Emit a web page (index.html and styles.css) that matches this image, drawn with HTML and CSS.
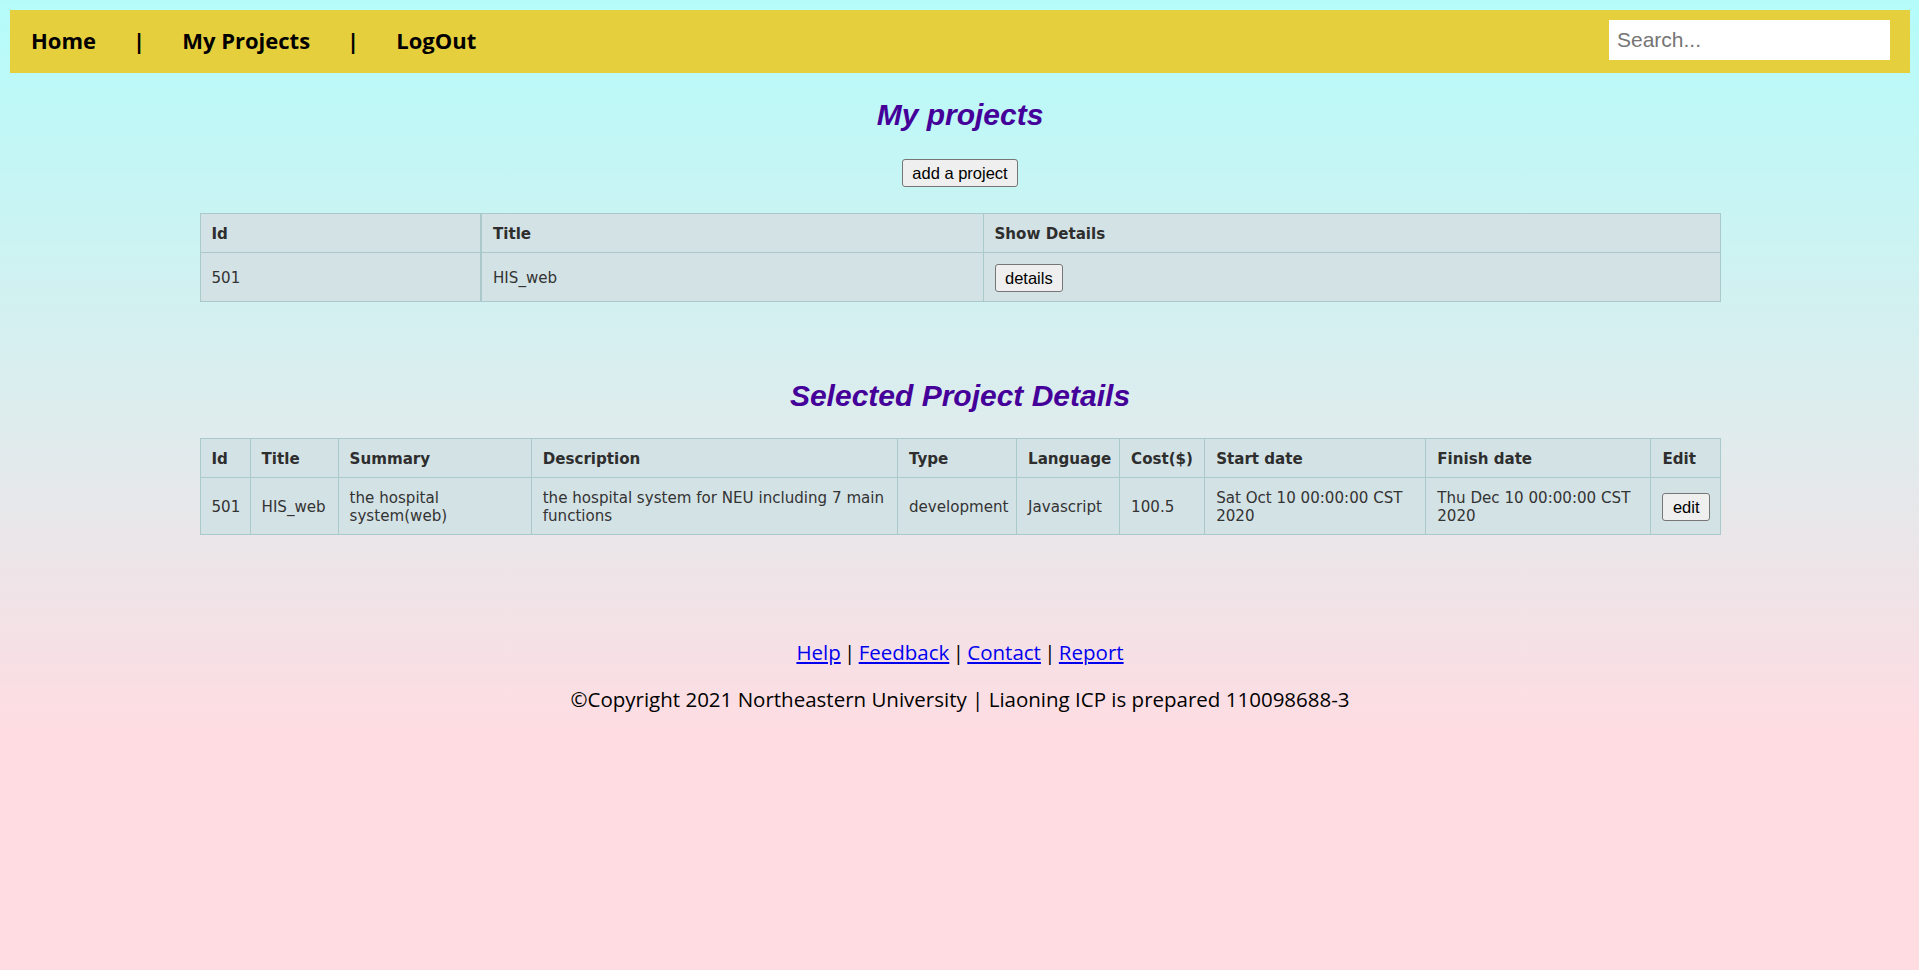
FILE: index.html
```html
<!DOCTYPE html>
<html lang="en">
<head>
<meta charset="utf-8">
<title>My projects</title>
<link rel="stylesheet" href="styles.css">
</head>
<body>
<nav class="topnav">
  <a class="nav-link" href="#">Home</a>
  <span class="nav-sep">|</span>
  <a class="nav-link" href="#">My Projects</a>
  <span class="nav-sep">|</span>
  <a class="nav-link" href="#">LogOut</a>
  <input class="search" type="text" placeholder="Search...">
</nav>

<main class="content">
  <h2 class="page-title">My projects</h2>
  <div class="actions"><button class="btn" type="button">add a project</button></div>

  <table class="grid grid-projects">
    <thead>
      <tr>
        <th class="c-pid">Id</th>
        <th class="c-ptitle">Title</th>
        <th>Show Details</th>
      </tr>
    </thead>
    <tbody>
      <tr>
        <td>501</td>
        <td>HIS_web</td>
        <td><button class="btn" type="button">details</button></td>
      </tr>
    </tbody>
  </table>

  <h2 class="page-title second">Selected Project Details</h2>

  <table class="grid grid-details">
    <thead>
      <tr>
        <th class="c-id">Id</th>
        <th class="c-title">Title</th>
        <th class="c-summary">Summary</th>
        <th class="c-desc">Description</th>
        <th class="c-type">Type</th>
        <th class="c-lang">Language</th>
        <th class="c-cost">Cost($)</th>
        <th class="c-start">Start date</th>
        <th class="c-finish">Finish date</th>
        <th class="c-edit">Edit</th>
      </tr>
    </thead>
    <tbody>
      <tr>
        <td>501</td>
        <td>HIS_web</td>
        <td>the hospital system(web)</td>
        <td>the hospital system for NEU including 7 main functions</td>
        <td>development</td>
        <td>Javascript</td>
        <td>100.5</td>
        <td>Sat Oct 10 00:00:00 CST 2020</td>
        <td>Thu Dec 10 00:00:00 CST 2020</td>
        <td><button class="btn" type="button">edit</button></td>
      </tr>
    </tbody>
  </table>
</main>

<footer class="footer">
  <p class="footer-links"><a href="#">Help</a> | <a href="#">Feedback</a> | <a href="#">Contact</a> | <a href="#">Report</a></p>
  <p class="footer-copy">©Copyright 2021 Northeastern University | Liaoning ICP is prepared 110098688-3</p>
</footer>
</body>
</html>
```

FILE: styles.css
```css
html {
  min-height: 100%;
  background: linear-gradient(180deg, #b4fcfa 0px, #dcedee 400px, #ffdce2 740px, #ffdce2 100%);
}

body {
  margin: 10px 9px 0 10px;
  font-family: "Liberation Sans", Arial, sans-serif;
}

.topnav {
  display: flex;
  align-items: center;
  gap: 37px;
  height: 63px;
  padding: 0 20px 3px 21px;
  box-sizing: border-box;
  background: #e6cf3c;
}

.nav-link,
.nav-sep {
  font-family: "Open Sans", "Noto Sans", sans-serif;
  font-weight: 700;
  font-size: 22px;
  color: #000;
  text-decoration: none;
  line-height: 30px;
}

.search {
  margin-left: auto;
  width: 281px;
  height: 40px;
  box-sizing: border-box;
  border: none;
  outline: none;
  padding: 0 8px;
  font-family: "Liberation Sans", Arial, sans-serif;
  font-size: 21px;
  background: #fff;
  color: #333;
}

.search::placeholder {
  color: #757575;
}

.content {
  display: flex;
  flex-direction: column;
  align-items: center;
}

.page-title {
  margin: 25px 0 0;
  font-family: "Liberation Sans", Arial, sans-serif;
  font-size: 30px;
  line-height: 34px;
  font-weight: 700;
  font-style: italic;
  color: #440099;
  text-align: center;
}

.page-title.second {
  margin-top: 77px;
}

.actions {
  margin-top: 27px;
}

.btn {
  font-family: "Liberation Sans", Arial, sans-serif;
  font-size: 16.5px;
  line-height: 20px;
  padding: 3px 9.5px;
  background: #efefef;
  color: #000;
  border: 1px solid #767676;
  border-radius: 3px;
}

.grid {
  width: 1521px;
  border-collapse: collapse;
  table-layout: fixed;
  font-family: "DejaVu Sans", Verdana, sans-serif;
  font-size: 15.1px;
  color: #333;
  background: #d3e2e5;
}

.grid th,
.grid td {
  box-sizing: border-box;
  border: 1px solid #a9c9cb;
  padding: 11px 8px 9px 11px;
  text-align: left;
  vertical-align: middle;
  line-height: 18px;
}

.grid th {
  font-weight: 700;
  color: #2e2e2e;
}

.grid-projects {
  margin-top: 26px;
}

.grid-projects .c-pid {
  width: 281px;
  border-right-width: 2px;
}

.grid-projects .c-ptitle {
  width: 502px;
}

.grid-projects td:first-child {
  border-right-width: 2px;
}

.grid-details {
  margin-top: 25px;
}

.grid-details td {
  padding-top: 11px;
  padding-bottom: 9px;
  line-height: 18px;
}

.c-id { width: 50px; }
.c-title { width: 88px; }
.c-summary { width: 193px; }
.c-desc { width: 366px; }
.c-type { width: 119px; }
.c-lang { width: 103px; }
.c-cost { width: 85px; }
.c-start { width: 221px; }
.c-finish { width: 225px; }
.c-edit { width: 69px; }

.footer {
  margin-top: 103px;
  text-align: center;
  font-family: "Open Sans", "Noto Sans", sans-serif;
  font-size: 20.5px;
  line-height: 28px;
  color: #000;
}

.footer p {
  margin: 0;
}

.footer-links {
  word-spacing: -2px;
}

.footer-copy {
  margin-top: 19px !important;
}

.footer a {
  color: #0000ee;
  text-decoration: underline;
}
```
